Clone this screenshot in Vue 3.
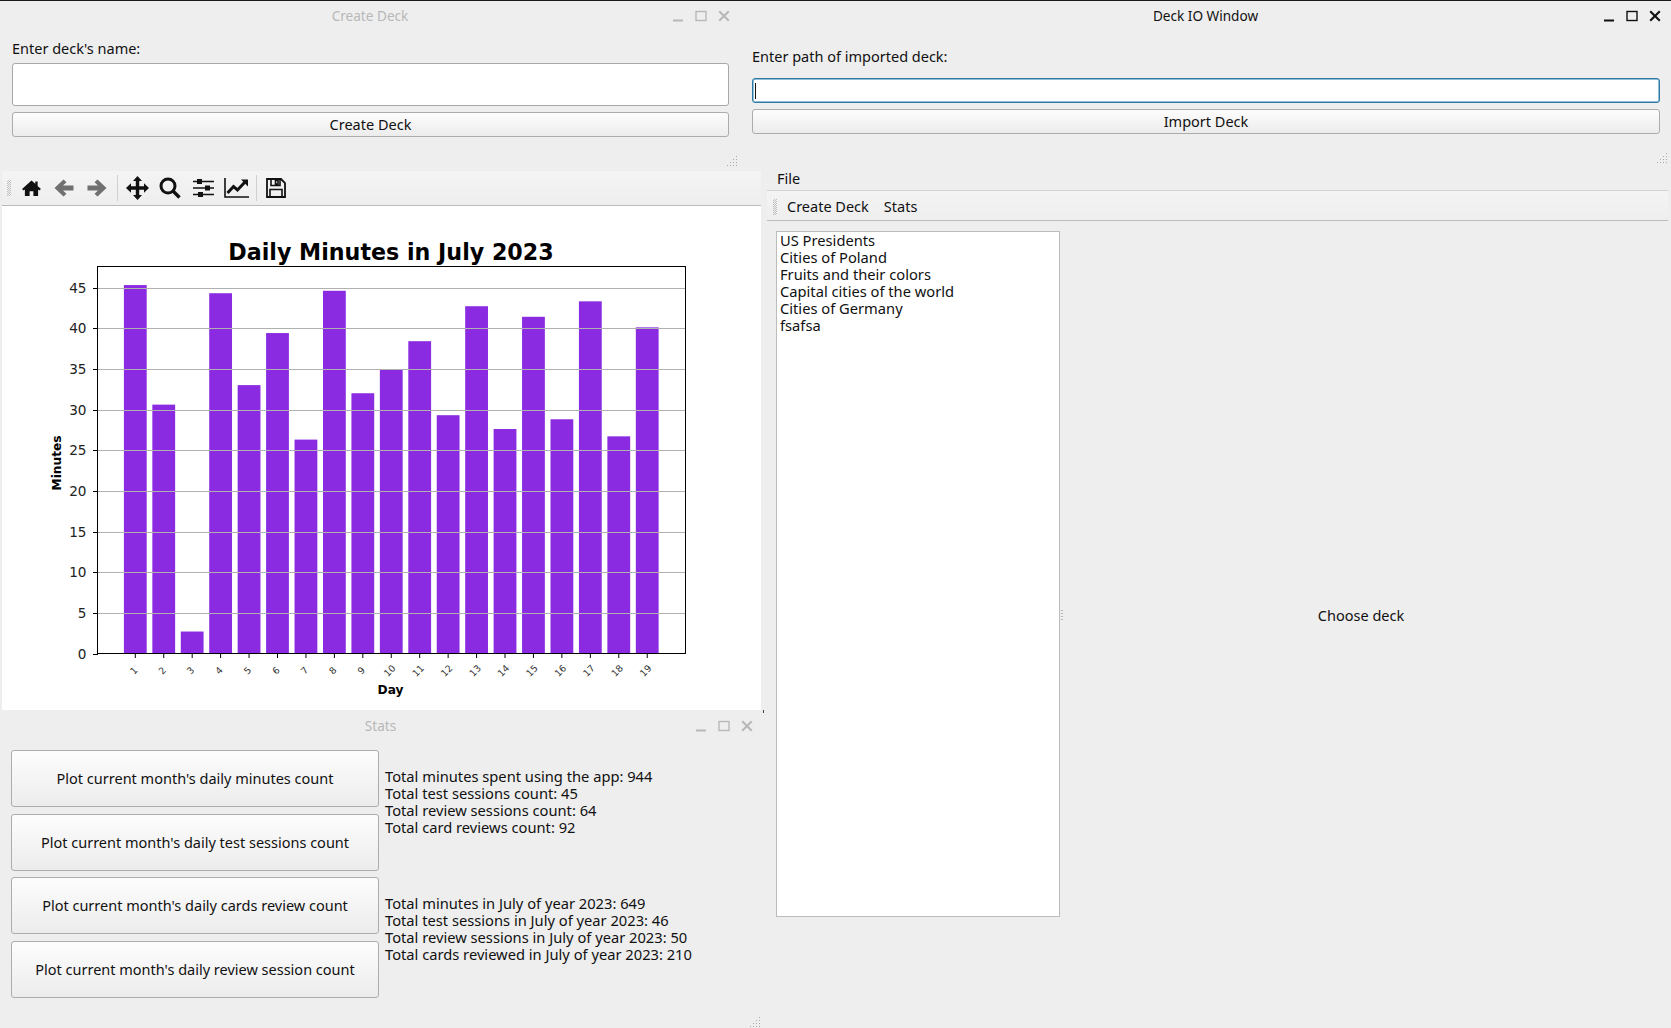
<script setup>
const values = [45.3, 30.6, 2.7, 44.3, 33, 39.4, 26.3, 44.6, 32, 34.9, 38.4, 29.3, 42.7, 27.6, 41.4, 28.8, 43.3, 26.7, 40.1]
const y0 = 653.5
const unit = 8.133
const yOf = (v) => y0 - v * unit
const xOf = (i) => 135.3 + i * 28.44
const bars = values.map((v, i) => ({ day: i + 1, x: xOf(i), top: yOf(v), h: v * unit }))
const yTicks = [0, 5, 10, 15, 20, 25, 30, 35, 40, 45]
const decks = ['US Presidents', 'Cities of Poland', 'Fruits and their colors', 'Capital cities of the world', 'Cities of Germany', 'fsafsa']
const plotButtons = [
  "Plot current month's daily minutes count",
  "Plot current month's daily test sessions count",
  "Plot current month's daily cards review count",
  "Plot current month's daily review session count",
]
const totals = ['Total minutes spent using the app: 944', 'Total test sessions count: 45', 'Total review sessions count: 64', 'Total card reviews count: 92']
const monthly = ['Total minutes in July of year 2023: 649', 'Total test sessions in July of year 2023: 46', 'Total review sessions in July of year 2023: 50', 'Total cards reviewed in July of year 2023: 210']
</script>

<template>
  <div class="desktop">
    <div class="topline"></div>

    <!-- Stats window -->
    <section class="window stats-win">
      <header class="titlebar inactive">
        <span class="title">Stats</span>
        <span class="controls">
          <svg width="12" height="12" viewBox="0 0 12 12"><path d="M1 10.5h10" stroke="currentColor" stroke-width="2"/></svg>
          <svg width="12" height="12" viewBox="0 0 12 12"><rect x="1" y="1.5" width="10" height="9" fill="none" stroke="currentColor" stroke-width="1.4"/></svg>
          <svg width="12" height="12" viewBox="0 0 12 12"><path d="M1.2 1.2l9.6 9.6M10.8 1.2l-9.6 9.6" stroke="currentColor" stroke-width="2.1"/></svg>
        </span>
      </header>
      <div class="stats-body">
        <div class="plot-buttons">
          <button v-for="b in plotButtons" :key="b" class="qbtn">{{ b }}</button>
        </div>
        <div class="stat-columns">
          <div class="stat-block">
            <div v-for="t in totals" :key="t">{{ t }}</div>
          </div>
          <div class="stat-block">
            <div v-for="t in monthly" :key="t">{{ t }}</div>
          </div>
        </div>
      </div>
      <span class="grip grip-stats"></span>
    </section>

    <!-- Matplotlib window -->
    <section class="window plot-win">
      <div class="mpl-toolbar">
        <span class="tb-grip"></span>
        <span class="tool"><svg width="21" height="17" viewBox="0 0 22 18"><path d="M11 0.5 L1 9.5 L2.6 11 L4 10 V17 H9 V12 H13 V17 H18 V10 L19.4 11 L21 9.5 L17.5 6.3 V1.5 H15 V4 Z" fill="#111"/></svg></span>
        <span class="tool"><svg width="20" height="18" viewBox="0 0 20 18"><path d="M9.5 0.5 L0.5 9 L9.5 17.5 L12.5 14.8 L9 11.5 H19.5 V6.5 H9 L12.5 3.2 Z" fill="#707070"/></svg></span>
        <span class="tool"><svg width="20" height="18" viewBox="0 0 20 18"><path d="M10.5 0.5 L19.5 9 L10.5 17.5 L7.5 14.8 L11 11.5 H0.5 V6.5 H11 L7.5 3.2 Z" fill="#707070"/></svg></span>
        <span class="tb-sep"></span>
        <span class="tool"><svg width="23" height="24" viewBox="0 0 23 24"><path d="M11.5 0 L16 5 H13.2 V10.2 H18 V7.2 L23 12 L18 16.8 V13.8 H13.2 V19 H16 L11.5 24 L7 19 H9.8 V13.8 H5 V16.8 L0 12 L5 7.2 V10.2 H9.8 V5 H7 Z" fill="#111"/></svg></span>
        <span class="tool"><svg width="22" height="22" viewBox="0 0 22 22"><circle cx="9" cy="9" r="7" fill="none" stroke="#111" stroke-width="3"/><path d="M13.5 13.5 L20.5 20.5" stroke="#111" stroke-width="3.4"/></svg></span>
        <span class="tool"><svg width="21" height="20" viewBox="0 0 21 20"><path d="M0 3.5h21M0 10h21M0 16.5h21" stroke="#111" stroke-width="1.6"/><rect x="4" y="1" width="5" height="5" fill="#111"/><rect x="12" y="7.5" width="5" height="5" fill="#111"/><rect x="5" y="14" width="5" height="5" fill="#111"/></svg></span>
        <span class="tool"><svg width="25" height="20" viewBox="0 0 25 20"><path d="M1 0 V19 H25" fill="none" stroke="#111" stroke-width="1.6"/><path d="M3.5 15 L9.5 8.5 L13.5 12 L21 4" fill="none" stroke="#111" stroke-width="3"/><path d="M17 1.5 H24 V8.5 Z" fill="#111"/></svg></span>
        <span class="tb-sep"></span>
        <span class="tool"><svg width="20" height="20" viewBox="0 0 20 20"><path d="M1 1 H15 L19 5 V19 H1 Z" fill="none" stroke="#111" stroke-width="1.8"/><path d="M5 1 V7.5 H14 V1 M9.5 2.5 H12 V6 H9.5 Z" fill="none" stroke="#111" stroke-width="1.6"/><path d="M4 19 V11.5 H16 V19" fill="none" stroke="#111" stroke-width="1.6"/></svg></span>
      </div>
      <div class="canvas">
        <svg class="chart" width="759" height="503" viewBox="2 206 759 503">
          <text x="391" y="260" class="chart-title" text-anchor="middle">Daily Minutes in July 2023</text>
          <g v-for="b in bars" :key="b.day">
            <rect :x="b.x - 11.4" :y="b.top" width="22.8" :height="b.h" fill="#8a2be2" />
          </g>
          <g v-for="t in yTicks" :key="t">
            <line v-if="t > 0" x1="98" x2="685" :y1="Math.round(yOf(t)) + 0.5" :y2="Math.round(yOf(t)) + 0.5" stroke="#b0b0b0" stroke-width="1.2" />
            <line x1="93" x2="98" :y1="Math.round(yOf(t)) + 0.5" :y2="Math.round(yOf(t)) + 0.5" stroke="#000" stroke-width="1" />
            <text x="86.5" :y="yOf(t) + 5" class="ytick" text-anchor="end">{{ t }}</text>
          </g>
          <g v-for="b in bars" :key="'t' + b.day">
            <line :x1="b.x" :x2="b.x" y1="654" y2="658" stroke="#000" stroke-width="1" />
            <text class="xtick" text-anchor="middle" :transform="`translate(${b.x + 0.8} 673) rotate(-45)`">{{ b.day }}</text>
          </g>
          <rect x="97.5" y="266.5" width="588" height="387" fill="none" stroke="#000" stroke-width="1" />
          <text x="390.5" y="694" class="axis-label" text-anchor="middle">Day</text>
          <text class="axis-label" text-anchor="middle" transform="translate(61 463) rotate(-90)">Minutes</text>
        </svg>
      </div>
    </section>
    <span class="stray-mark"></span>

    <!-- Create Deck window -->
    <section class="window create-win">
      <header class="titlebar inactive">
        <span class="title">Create Deck</span>
        <span class="controls">
          <svg width="12" height="12" viewBox="0 0 12 12"><path d="M1 10.5h10" stroke="currentColor" stroke-width="2"/></svg>
          <svg width="12" height="12" viewBox="0 0 12 12"><rect x="1" y="1.5" width="10" height="9" fill="none" stroke="currentColor" stroke-width="1.4"/></svg>
          <svg width="12" height="12" viewBox="0 0 12 12"><path d="M1.2 1.2l9.6 9.6M10.8 1.2l-9.6 9.6" stroke="currentColor" stroke-width="2.1"/></svg>
        </span>
      </header>
      <div class="create-body">
        <label class="field-label">Enter deck's name:</label>
        <div class="lineedit tall"></div>
        <button class="qbtn slim">Create Deck</button>
      </div>
      <span class="grip grip-create"></span>
    </section>

    <!-- Deck IO window -->
    <section class="window io-win">
      <header class="titlebar">
        <span class="title">Deck IO Window</span>
        <span class="controls">
          <svg width="12" height="12" viewBox="0 0 12 12"><path d="M1 10.5h10" stroke="currentColor" stroke-width="2"/></svg>
          <svg width="12" height="12" viewBox="0 0 12 12"><rect x="1" y="1.5" width="10" height="9" fill="none" stroke="currentColor" stroke-width="1.4"/></svg>
          <svg width="12" height="12" viewBox="0 0 12 12"><path d="M1.2 1.2l9.6 9.6M10.8 1.2l-9.6 9.6" stroke="currentColor" stroke-width="2.1"/></svg>
        </span>
      </header>
      <div class="io-body">
        <label class="field-label">Enter path of imported deck:</label>
        <div class="lineedit focused"><span class="caret"></span></div>
        <button class="qbtn slim">Import Deck</button>
      </div>
      <span class="grip grip-io"></span>
    </section>

    <!-- Main window -->
    <section class="window main-win">
      <nav class="menubar"><span>File</span></nav>
      <div class="main-toolbar">
        <span class="tb-grip"></span>
        <span class="tb-text first">Create Deck</span>
        <span class="tb-text">Stats</span>
      </div>
      <div class="main-body">
        <ul class="deck-list">
          <li v-for="d in decks" :key="d">{{ d }}</li>
        </ul>
        <span class="splitter"></span>
        <div class="deck-pane">Choose deck</div>
      </div>
    </section>
  </div>
</template>

<style>
html, body { margin: 0; background: #eeeeee; }
</style>

<style scoped>
.desktop {
  position: relative;
  width: 1671px;
  height: 1028px;
  overflow: hidden;
  background: #eeeeee;
  font-family: "Noto Sans", "Open Sans", sans-serif;
  font-size: 14.5px;
  line-height: 17px;
  color: #111;
}
.topline { position: absolute; left: 0; right: 0; top: 0; height: 1px; background: #1a1a1a; z-index: 5; }
.window { position: absolute; background: #eeeeee; box-sizing: border-box; }
.create-win { left: 0; top: 1px; width: 740px; height: 170px; }
.io-win { left: 740px; top: 1px; width: 931px; height: 167px; }
.plot-win { left: 2px; top: 171px; width: 759px; height: 539px; display: flex; flex-direction: column; }
.stats-win { left: 0; top: 710px; width: 761px; height: 318px; }
.main-win { left: 767px; top: 168px; width: 901px; height: 860px; display: flex; flex-direction: column; }
.stray-mark { position: absolute; left: 763px; top: 710px; width: 1px; height: 3px; background: #444; }

.titlebar { height: 28px; margin-bottom: 2px; display: flex; align-items: center; justify-content: center; position: relative; color: #111; font-size: 13.6px; }
.titlebar.inactive { color: #b8b8b8; }
.controls { position: absolute; top: 9px; display: flex; gap: 11px; color: inherit; right: 10px; }
.stats-win .controls { right: 8px; top: 10px; }
.stats-win .title { padding-top: 2px; }

.create-body { padding: 9px 11px 0 12px; display: flex; flex-direction: column; }
.io-body { padding: 17px 11px 0 12px; display: flex; flex-direction: column; }
.field-label { height: 17px; line-height: 17px; }
.create-body .field-label { margin-bottom: 6px; }
.io-body .field-label { margin-bottom: 13px; }

.lineedit {
  box-sizing: border-box; height: 25px; background: #fff;
  border: 1px solid #a8a8a8; border-radius: 3px; margin-bottom: 6px; display: flex; align-items: center;
}
.lineedit.tall { height: 43px; }
.lineedit.focused { border-color: #2b7ba6; box-shadow: inset 0 0 0 0.5px #2b7ba6; }
.caret { width: 1px; height: 16px; margin-left: 2px; background: #111; }

.qbtn {
  box-sizing: border-box; display: block; width: 100%; padding: 0;
  border: 1px solid #acacac; border-radius: 3px;
  background: linear-gradient(#fdfdfd, #ececec);
  font: inherit; color: #111; text-align: center;
}
.qbtn.slim { height: 25px; }

.grip {
  position: absolute; width: 11px; height: 11px;
  background-image: radial-gradient(#a8a8a8 0.8px, transparent 0.9px);
  background-size: 3px 3px;
  clip-path: polygon(100% 0, 100% 100%, 0 100%);
}
.grip-create { right: 3px; bottom: 5px; }
.grip-io { right: 4px; bottom: 5px; }
.grip-stats { right: 1px; bottom: 1px; }

.stats-body { display: flex; padding: 10px 0 0 11px; }
.plot-buttons { width: 368px; display: flex; flex-direction: column; gap: 6.5px; }
.plot-buttons .qbtn { height: 57px; }
.stat-columns { margin-left: 6px; padding-top: 18px; display: flex; flex-direction: column; gap: 59px; font-size: 14.7px; white-space: nowrap; }

.mpl-toolbar {
  height: 35px; box-sizing: border-box; display: flex; align-items: center; flex: none;
  background: linear-gradient(#f4f4f4, #eeeeee);
  border-bottom: 1px solid #bcbcbc;
}
.tb-grip {
  width: 4px; height: 16px; margin: 0 0 0 5px; flex: none;
  background-image: conic-gradient(#c0c0c0 25%, transparent 0 50%, #c0c0c0 0 75%, transparent 0);
  background-size: 2px 2px;
}
.tool { width: 33px; flex: none; display: flex; justify-content: center; align-items: center; }
.mpl-toolbar .tb-grip + .tool { margin-left: 3.5px; }
.tb-sep { width: 1px; height: 26px; margin: 0 3px; background: #d0d0d0; flex: none; }
.canvas { flex: 1; background: #fff; }
.chart { display: block; }
.chart-title { font: 700 22.2px "DejaVu Sans", sans-serif; fill: #000; }
.ytick { font: 13.6px "DejaVu Sans", sans-serif; fill: #222; }
.xtick { font: 9.4px "DejaVu Sans", sans-serif; fill: #333; }
.axis-label { font: 700 12.2px "DejaVu Sans", sans-serif; fill: #000; }

.menubar { height: 22px; box-sizing: border-box; padding: 0 0 2px 10px; display: flex; align-items: center; flex: none; }
.main-toolbar {
  height: 31px; box-sizing: border-box; padding-top: 2px; display: flex; align-items: center; flex: none;
  background: linear-gradient(#f4f4f4, #eeeeee);
  border-top: 1px solid #d4d4d4; border-bottom: 1px solid #bcbcbc;
}
.main-toolbar .tb-grip { margin-left: 6px; }
.tb-text { margin-left: 15px; }
.tb-text.first { margin-left: 10px; }
.main-body { flex: 1; display: flex; padding: 10px 9px 29px 9px; position: relative; }
.deck-list {
  width: 284px; height: 686px; box-sizing: border-box; flex: none; margin: 0; padding: 0 0 0 3px; list-style: none;
  background: #fff; border: 1px solid #bcbcbc; font-size: 14.7px;
}
.splitter {
  width: 2px; height: 12px; align-self: center; margin: 0 0 0 1px; flex: none;
  background-image: radial-gradient(#b5b5b5 0.6px, transparent 0.7px);
  background-size: 2px 3px;
}
.deck-pane { flex: 1; display: flex; align-items: center; justify-content: center; }
</style>
